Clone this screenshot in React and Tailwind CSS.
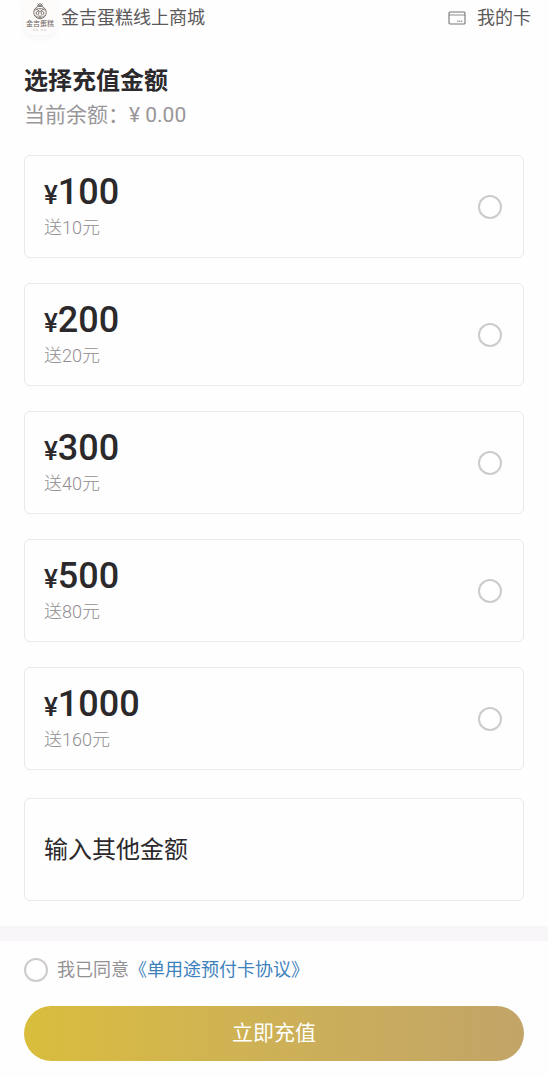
import { useState } from 'react';

const options = [
  { amount: 100, bonus: 10 },
  { amount: 200, bonus: 20 },
  { amount: 300, bonus: 40 },
  { amount: 500, bonus: 80 },
  { amount: 1000, bonus: 160 },
];

const circle =
  'size-6 shrink-0 cursor-pointer appearance-none rounded-full border-2 border-[#cecacd] bg-white checked:border-8 checked:border-[#d5b840]';

function Logo() {
  return (
    <span className="flex w-8 shrink-0 flex-col items-center rounded-b-lg bg-[#fdfcfb] pt-0.5 pb-1 shadow-[0_3px_6px_rgba(0,0,0,0.04)]">
      <svg viewBox="0 0 32 36" className="h-[18px] w-4" fill="none" stroke="#7d766f" strokeWidth="2" aria-hidden="true">
        <path d="M16 8 11 3M16 8l5-5M16 8V2M10 8c2-2 4-2 6 0 2-2 4-2 6 0" />
        <circle cx="16" cy="21" r="12.5" />
        <path d="M5 17c5-5 17-5 22 0M8 14l8 5 8-5M7 27c5 5 13 5 18 0M13 27l3 2 3-2" />
        <circle cx="11" cy="22" r="3" />
        <circle cx="21" cy="22" r="3" />
      </svg>
      <span className="whitespace-nowrap text-[7px] leading-[9px] text-[#6b645f]">金吉蛋糕</span>
      <svg viewBox="0 0 16 2" className="h-0.5 w-4" stroke="#c6c1bd" strokeWidth="1" aria-hidden="true">
        <path d="M1 1h6M9 1h6" strokeDasharray="2 1" />
      </svg>
    </span>
  );
}

function CardIcon() {
  return (
    <svg viewBox="0 0 18 14" className="h-3.5 w-[18px]" fill="none" stroke="#777376" aria-hidden="true">
      <rect x="1" y="1" width="16" height="12" rx="1" strokeWidth="1.1" />
      <path d="M1 4h16" strokeWidth="0.8" />
      <path d="M9 10.2h6" strokeWidth="1" strokeDasharray="1.4 0.6" />
    </svg>
  );
}

export default function App() {
  const [selected, setSelected] = useState(null);
  const [agreed, setAgreed] = useState(false);

  return (
    <div className="bg-[#fefefe] font-[Roboto,'Noto_Sans_CJK_SC',sans-serif] text-[#2b292b]" lang="zh-CN">
      <header className="flex h-9 items-start justify-between pr-[17px] pl-6 text-lg leading-9 text-[#5b595a]">
        <div className="flex items-start gap-[5px]">
          <Logo />
          <span>金吉蛋糕线上商城</span>
        </div>
        <a href="#cards" className="flex items-center gap-[11px]">
          <CardIcon />
          我的卡
        </a>
      </header>

      <main className="px-6 pt-[27px] pb-[25px]">
        <h1 className="text-2xl leading-9 font-bold">选择充值金额</h1>
        <p className="text-[21px] leading-8 text-[#999699]">当前余额：¥ 0.00</p>

        <div role="radiogroup" aria-label="选择充值金额" className="mt-6 flex flex-col gap-[25px]">
          {options.map(({ amount, bonus }) => (
            <label
              key={amount}
              className="flex h-[103px] cursor-pointer items-center justify-between rounded-md border border-[#ebe9eb] pr-[21px] pl-[19px]"
            >
              <span className="flex flex-col pb-0.5">
                <span className="text-[36px] leading-[42px] font-medium">
                  <span className="text-[26px]">¥</span>
                  {amount}
                </span>
                <span className="text-lg leading-6 font-light text-[#918e91]">送{bonus}元</span>
              </span>
              <input
                type="radio"
                name="amount"
                value={amount}
                checked={selected === amount}
                onChange={() => setSelected(amount)}
                className={circle}
              />
            </label>
          ))}
        </div>

        <input
          type="text"
          inputMode="decimal"
          aria-label="输入其他金额"
          placeholder="输入其他金额"
          className="mt-7 block h-[103px] w-full rounded-md border border-[#ebe9eb] bg-transparent px-[19px] text-2xl outline-none placeholder:text-[#2b292b]"
        />
      </main>

      <footer className="border-t-[15px] border-[#f8f6f8] px-6 pt-4 pb-[15px]">
        <div className="flex items-center gap-[9px] text-lg leading-[26px]">
          <input
            id="agree"
            type="checkbox"
            checked={agreed}
            onChange={(e) => setAgreed(e.target.checked)}
            className={circle}
          />
          <div>
            <label htmlFor="agree" className="text-[#949194]">
              我已同意
            </label>
            <a href="#agreement" className="text-[#3e82bd]">
              《单用途预付卡协议》
            </a>
          </div>
        </div>
        <button
          type="button"
          className="mt-[23px] block h-[55px] w-full rounded-full bg-linear-to-r from-[#d9bd3c] to-[#c2a468] text-[21px] text-white"
        >
          立即充值
        </button>
      </footer>
    </div>
  );
}
